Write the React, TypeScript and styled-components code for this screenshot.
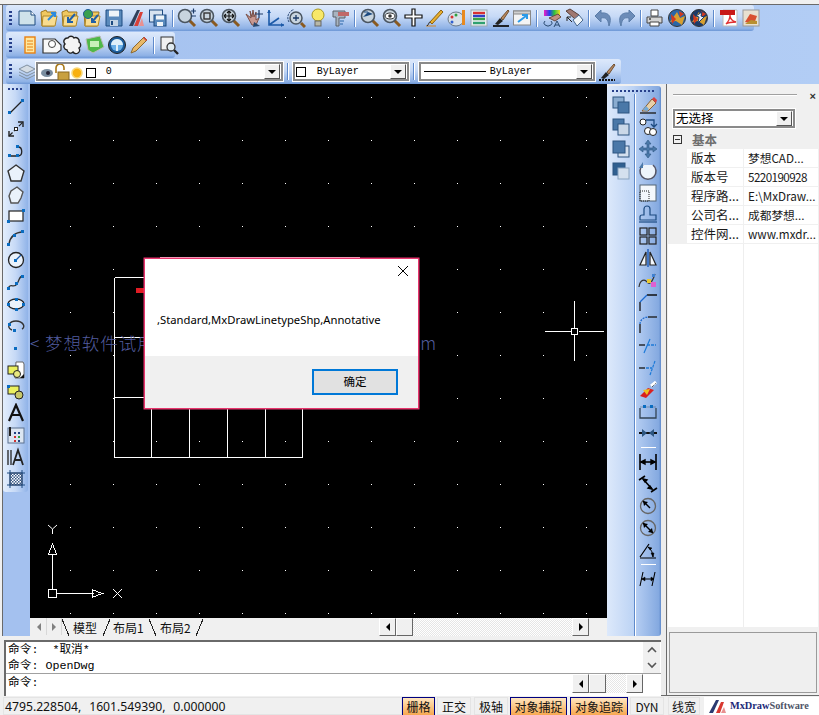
import React from 'react';
import styled, {createGlobalStyle} from 'styled-components';

const cjk = '"Noto Sans CJK SC", "Noto Sans", sans-serif';
const mono = '"Liberation Mono", "Noto Sans CJK SC", monospace';

const GlobalStyle = createGlobalStyle`
  html, body { margin: 0; padding: 0; background: #f0f0f0; }
  * { box-sizing: border-box; }
`;

const Mag: React.FC<{children?: React.ReactNode}> = ({children}) => (
  <>
    <path d="M12 12l6 6" stroke="#8a5a20" strokeWidth="3" />
    <circle cx="8" cy="8" r="6.5" fill="#c8d4de" stroke="#4a5560" strokeWidth="1.6" />
    {children}
  </>
);
const Box = ({x, y, s = 3}: {x: number; y: number; s?: number}) => <rect x={x} y={y} width={s} height={s} fill="#0a6cc0" />;
const Folder: React.FC<{children?: React.ReactNode}> = ({children}) => (
  <>
    <path d="M2 4l5-2 1 2h9l-2 14H3z" fill="#f0c860" stroke="#a07820" />
    <path d="M4 8h14l-2 10H3z" fill="#f8dc90" stroke="#b08828" />
    {children}
  </>
);
const Globe = ({c = '#2a66a8'}: {c?: string}) => (
  <>
    <circle cx="10" cy="10" r="8.5" fill={c} stroke="#333" />
    <path d="M3 14l7-10 3 6 5-2-3 9-6-4z" fill="#d8a030" />
    <path d="M4 6l5 5-4 5zM12 3l5 3-4 3z" fill="#d03a20" />
  </>
);
const Stack = ({a, b}: {a: string; b: string}) => (
  <>
    <rect x="2" y="2" width="11" height="11" fill={a} stroke="#2c5580" />
    <rect x="7" y="7" width="11" height="11" fill={b} stroke="#2c5580" />
  </>
);
const Dim: React.FC<{children?: React.ReactNode}> = ({children}) => (
  <g stroke="#000" strokeWidth="1.4" fill="none">{children}</g>
);

const icons: Record<string, React.ReactNode> = {
  file: <><path d="M2 3h12l4 4v10H2z" fill="#cfe2ea" stroke="#1c4a80" /><path d="M14 3v4h4" fill="#fff" stroke="#1c4a80" /></>,
  open: <Folder><path d="M9 12l7-7M12 5h4v4" stroke="#2a8ae0" strokeWidth="2" fill="none" /></Folder>,
  openRev: <Folder><path d="M15 6L8 14M8 9v5h5" stroke="#2060a8" strokeWidth="2" fill="none" /></Folder>,
  openWeb: <Folder><circle cx="6" cy="6" r="4.5" fill="#38a050" stroke="#1c5aa0" /><path d="M16 7l-6 7M10 10v4h4" stroke="#2060a8" strokeWidth="2" fill="none" /></Folder>,
  save: <><path d="M2 2h16v16H2z" fill="#5a8abc" stroke="#1c4a80" /><rect x="5" y="2.500" width="10" height="6" fill="#eef4f8" /><rect x="6" y="12" width="8" height="6" fill="#c4d4e4" /><rect x="7" y="13" width="2" height="4" fill="#1c4a80" /></>,
  cad: <><path d="M3 18L11 2h3L7 18z" fill="#30405c" /><path d="M8 18L14 4h3l-5 14z" fill="#d84038" /><path d="M13 18l3-8 2 8z" fill="#e89090" /></>,
  saveAs: <><rect x="1.5" y="2" width="13" height="12" fill="#d8e4f0" stroke="#1c4a80" /><rect x="6" y="7" width="12" height="11" fill="#5a8abc" stroke="#1c4a80" /><rect x="8" y="7.5" width="8" height="4" fill="#eef4f8" /><rect x="9" y="14" width="6" height="4" fill="#eef4f8" /></>,
  zoomPm: <Mag><path d="M14 3h5M16.5 .5v5M14 8h5" stroke="#1c3a68" strokeWidth="1.2" /></Mag>,
  zoomWin: <Mag><rect x="5" y="5" width="6" height="6" fill="none" stroke="#333" strokeWidth="1.4" /></Mag>,
  zoomPan: <Mag><path d="M8 3v10M3 8h10M8 3l-2 2M8 3l2 2M8 13l-2-2M8 13l2-2M3 8l2-2M3 8l2 2M13 8l-2-2M13 8l-2 2" stroke="#111" strokeWidth="1.1" fill="none" /></Mag>,
  hand: <><path d="M3 6l5 4-1-7 2 6 1-7 1 7 2-5v8l3-2-3 7H9z" fill="#c89890" stroke="#7a5048" /><path d="M11 14l6 4-7 1z" fill="#2a4a70" /><path d="M16 2v8M12 6h8" stroke="#1c3a68" strokeWidth="1.2" /></>,
  ucs: <><path d="M4 2v15h15M4 17l10-7" stroke="#1c5aa8" strokeWidth="1.6" fill="none" /><path d="M2 5l2-3 2 3zM16 15l3 2-3 2z" fill="#1c5aa8" /></>,
  zoomPrev: <><path d="M15 15l4 4" stroke="#8a5a20" strokeWidth="3" /><circle cx="10" cy="10" r="6" fill="#c8d4de" stroke="#4a5560" strokeWidth="1.5" /><path d="M10 7v6M7 10h6" stroke="#1c3a68" strokeWidth="1.3" /><path d="M3 14A8.5 8.5 0 0 1 8 1.5" stroke="#1c3a68" fill="none" strokeDasharray="2 1" /></>,
  bulb: <><circle cx="10" cy="7" r="6" fill="#f8e868" stroke="#a89820" /><rect x="7" y="13" width="6" height="5" fill="#b8b8a8" stroke="#666" /></>,
  tape: <><path d="M3 3h12v7H9v8H6V9H3z" fill="#a8b4c0" stroke="#5a6068" /><path d="M8 4h11v4H8z" fill="#c06868" /><path d="M10 13h4M10 16h3" stroke="#2a66a8" /></>,
  zoomDark: <Mag><path d="M3 9l5-5 5 2-6 2z" fill="#1c4a80" /><path d="M4 4l4 0" stroke="#1c4a80" /></Mag>,
  zoomEye: <Mag><ellipse cx="8" cy="8" rx="5" ry="3" fill="#fff" stroke="#333" /><circle cx="8" cy="8" r="1.8" fill="#333" /></Mag>,
  cross: <path d="M9 1h3v6h7v3h-7v8H9v-8H2V7h7z" fill="#fff" stroke="#111" strokeWidth="1.2" />,
  pen: <><path d="M5 14L16 2l2 2L7 16z" fill="#e8b030" stroke="#8a6010" /><path d="M1 18h10" stroke="#c09868" strokeWidth="1.5" /><path d="M2 18c2-2 2-4 3-4" stroke="#222" fill="none" /></>,
  palette: <><ellipse cx="9" cy="11" rx="8" ry="7" fill="#d8e0e8" stroke="#6a7a8a" /><circle cx="5" cy="9" r="1.5" fill="#d83030" /><circle cx="9" cy="7" r="1.5" fill="#30a040" /><circle cx="5" cy="14" r="1.5" fill="#3060d0" /><rect x="15" y="2" width="3" height="15" fill="#e88a20" /></>,
  layers: <><rect x="2" y="2" width="16" height="16" fill="#e8eef0" stroke="#9aa8b0" /><path d="M4 5h12" stroke="#d83030" strokeWidth="2.4" /><path d="M4 8h12" stroke="#3040c8" strokeWidth="2.4" /><path d="M4 11h12" stroke="#38a048" strokeWidth="2.4" /><path d="M4 15h12" stroke="#30a070" strokeWidth="2.4" /></>,
  brush: <><path d="M2 18h16" stroke="#111" strokeWidth="1.8" /><path d="M4 16l5-6 3 3-5 4z" fill="#222" /><path d="M10 10l7-8 1 1-6 9z" fill="#b88860" stroke="#705030" /></>,
  arrowBox: <><rect x="1.5" y="3" width="17" height="14" fill="#f4f4f4" stroke="#888" /><rect x="1.5" y="3" width="17" height="3" fill="#d0d0d0" stroke="#888" /><path d="M6 14l8-6M10 7h5v4" stroke="#2a9ae8" strokeWidth="2" fill="none" /></>,
  rainbow: <><path d="M2 2h16v6H2z" fill="url(#rb)" /><path d="M7 10l9-4 3 3-6 4z" fill="#c09080" stroke="#6a4a40" /><path d="M3 13a4 3 0 1 0 6 0M12 19l3-6 3 6M13 17h4" stroke="#2a4a70" fill="none" /></>,
  matchProp: <><path d="M2 3l4-2 9 6-4 4z" fill="#a07870" stroke="#5a4038" /><path d="M9 12l6-5 4 5-6 6z" fill="#eef4f8" stroke="#4a6a90" /><path d="M3 9l5 5M3 9v4M3 9h4" stroke="#222" fill="none" /></>,
  undo: <path d="M7 2L1 8l6 6v-4c5-1 7 1 8 8 3-8 1-14-8-13z" fill="#6c8cb8" stroke="#5a7ca8" />,
  redo: <path d="M13 2l6 6-6 6v-4c-5-1-7 1-8 8-3-8-1-14 8-13z" fill="#6c8cb8" stroke="#5a7ca8" />,
  print: <><path d="M6 2h7v6H6z" fill="#fff" stroke="#444" /><path d="M2 9h15v6H2z" fill="#d4d4d4" stroke="#444" /><path d="M5 14h9v4H5z" fill="#fff" stroke="#444" /><circle cx="5" cy="11" r="1" fill="#444" /></>,
  globe: <Globe />,
  globe2: <><Globe c="#1c3a68" /><path d="M13 4l-6 4 3 1-1 6 6-6-3-1z" fill="#e8f0f8" stroke="#1c3a68" /></>,
  pdf: <><path d="M4 2h14v16H4z" fill="#fff" stroke="#bbb" /><rect x="1" y="2" width="15" height="5" fill="#c81818" /><path d="M7 16c3-3 4-6 4-9 0 4 2 6 6 7-4 0-7 0-10 2z" fill="none" stroke="#e03030" strokeWidth="1.3" /></>,
  pdfImg: <><rect x="2" y="2" width="16" height="16" fill="#e8e0d0" stroke="#999" /><path d="M4 14l5-8 7 2-3 8z" fill="#d85030" /><path d="M4 16l6-4 6 1v3z" fill="#b89030" /></>,
  list: <><rect x="5" y="2" width="10" height="16" fill="#ffe8a0" stroke="#e88010" strokeWidth="1.4" /><path d="M7 6h6M7 9h6M7 12h6M7 15h6" stroke="#e88010" /></>,
  wipe: <><path d="M1 4h12l6 6v5l-4 3H1z" fill="#f8f8f8" stroke="#333" strokeWidth="1.2" /><circle cx="10" cy="9" r="3.5" fill="#fff" stroke="#444" /></>,
  cloud: <path d="M5 3a3.5 3.5 0 0 1 6 0 3.5 3.5 0 0 1 5 4 3.5 3.5 0 0 1 0 6 3.5 3.5 0 0 1-6 4 3.5 3.5 0 0 1-6-2 3.5 3.5 0 0 1-2-6 3.5 3.5 0 0 1 3-6z" fill="#f4f4f4" stroke="#222" strokeWidth="1.4" />,
  chat: <><path d="M1 4l14-3 4 11-11 6-5-3z" fill="#50b848" stroke="#bbb" /><rect x="5" y="6" width="9" height="6" fill="#c8f0b8" /></>,
  dial: <><circle cx="10" cy="10" r="8.5" fill="#1c5a98" stroke="#222" /><circle cx="10" cy="10" r="6" fill="#6ab0e8" /><path d="M4 10a6 6 0 0 1 12 0zM9 10h2v6H9z" fill="#dff0fa" /></>,
  pencil: <><path d="M2 18l2-5L15 2l3 3L7 16z" fill="#e8b868" stroke="#8a6830" /><path d="M14 3l3 3 1-1-3-3z" fill="#d84040" /></>,
  preview: <><rect x="2" y="2" width="12" height="13" fill="#f0f0f0" stroke="#333" /><path d="M15 15l4 4" stroke="#222" strokeWidth="2.4" /><circle cx="12" cy="12" r="4" fill="#e0eaf0" stroke="#333" strokeWidth="1.3" /></>,
  layerMgr: <><path d="M10 3l8 4-8 4-8-4z" fill="#d4dce4" stroke="#8090a0" /><path d="M2 10l8 4 8-4M2 13l8 4 8-4" fill="none" stroke="#8090a0" /></>,
  brushDot: <><path d="M2 18h16" stroke="#111" strokeWidth="1.8" strokeDasharray="2 1" /><path d="M4 16l5-6 3 3-5 4z" fill="#222" /><path d="M10 10l7-8 1 1-6 9z" fill="#b88860" stroke="#705030" /></>,
  line: <><path d="M4 16L16 4" stroke="#222" strokeWidth="1.2" /><Box x={2} y={14} /><Box x={15} y={2} /></>,
  xline: <><path d="M3 17L17 3" stroke="#222" strokeDasharray="5 2" strokeWidth="1.2" /><path d="M3 12v5h5M12 3h5v5" stroke="#222" fill="none" strokeWidth="1.4" /><rect x="8.5" y="8.5" width="3" height="3" fill="#fff" stroke="#222" /></>,
  pline: <><path d="M3 15h9c5 0 5-9 0-9" stroke="#222" fill="none" strokeWidth="1.3" /><Box x={2} y={13} /><Box x={10} y={13} /><Box x={10} y={4} /></>,
  polygon: <path d="M10 2l8 6-3 10H5L2 8z" fill="#eaf2fb" stroke="#333" strokeWidth="1.4" />,
  poly2: <path d="M11 2l6 5-2 6-3 5H5L3 11l2-5z" fill="#eaf2fb" stroke="#555" strokeWidth="1.4" />,
  rect: <><rect x="3" y="5" width="14" height="10" fill="#fff" stroke="#222" strokeWidth="1.2" /><Box x={1} y={14} /><Box x={16} y={3} /></>,
  arc: <><path d="M3 16C4 9 9 4 17 4" stroke="#333" fill="none" strokeWidth="1.4" /><Box x={1} y={15} /><Box x={7} y={6} /><Box x={15} y={2} /></>,
  circle: <><circle cx="10" cy="10" r="7.5" fill="#eaf2fb" stroke="#222" strokeWidth="1.3" /><path d="M10 10l5-5" stroke="#1c5aa8" strokeWidth="1.2" /><Box x={8} y={9} /></>,
  spline: <><path d="M2 17c2-7 6 0 9-5s2-8 6-8" stroke="#333" fill="none" strokeWidth="1.3" /><Box x={1} y={15} /><Box x={9} y={10} /><Box x={15} y={3} /></>,
  ellipse: <><ellipse cx="10" cy="10" rx="8" ry="5" fill="#eaf2fb" stroke="#222" strokeWidth="1.3" /><Box x={1} y={9} /><Box x={16} y={9} /><Box x={9} y={4} /><Box x={9} y={14} /></>,
  ellipseArc: <><path d="M6 14C0 12 3 5 10 5s10 6 6 8" stroke="#333" fill="none" strokeWidth="1.4" /><Box x={2} y={7} /><Box x={7} y={13} /></>,
  point: <Box x={8} y={9} />,
  block: <><path d="M10 2h7l1 2v14H9z" fill="#fff" stroke="#666" /><rect x="2" y="6" width="10" height="8" fill="#eaf060" stroke="#222" /><circle cx="11" cy="14" r="3.5" fill="#e8e880" stroke="#222" /><path d="M14 18l4-4v4z" fill="#111" /></>,
  makeBlock: <><rect x="2" y="4" width="11" height="8" fill="#eaf060" stroke="#222" /><circle cx="13" cy="13" r="4" fill="#c8c868" stroke="#222" /><Box x={1} y={3} /></>,
  textA: <path d="M3 18L10 2l7 16M5.5 12h9" stroke="#111" strokeWidth="2.2" fill="none" />,
  table: <><rect x="2" y="3" width="16" height="15" fill="#dce6f2" stroke="#5a7090" /><path d="M8 7h2v2H8zM12 7h2v2h-2z" fill="#204080" /><path d="M8 11h2v2H8z" fill="#d03030" /><path d="M12 11h2v2h-2z" fill="#30a040" /><path d="M8 15h2v2H8z" fill="#d03030" /><path d="M12 15h2v2h-2z" fill="#204080" /><path d="M4 2v9" stroke="#222" strokeWidth="2" /></>,
  mtext: <><path d="M2 3v15M5 3v15" stroke="#222" strokeWidth="1.3" /><path d="M7 18l5-15 5 15M9 13h6" stroke="#222" strokeWidth="1.8" fill="none" /></>,
  hatch: <><rect x="4" y="4" width="12" height="12" fill="url(#ht)" stroke="#445" /><path d="M1 4h18M1 16h18M4 1v18M16 1v18" stroke="#1c4a80" /></>,
  s1: <Stack a="#8aacd0" b="#4a78a8" />,
  s2: <Stack a="#4a78a8" b="#cad8e8" />,
  s3: <><rect x="7" y="7" width="11" height="11" fill="#d4e0ee" stroke="#2c5580" /><rect x="2" y="2" width="12" height="12" fill="#4a78a8" stroke="#2c5580" /></>,
  s4: <><rect x="2" y="2" width="12" height="12" fill="#2f5f90" stroke="#2c5580" /><rect x="7" y="7" width="11" height="11" fill="#d4e0ee" stroke="#8aa4c0" /></>,
  eraser: <><path d="M2 18h16" stroke="#222" strokeWidth="1.4" /><path d="M4 16l10-12 4 4-8 8z" fill="#e8d0a8" stroke="#8a6030" /><path d="M14 4l2-2 3 3-1 3z" fill="#d84040" /><path d="M5 15l3-4 3 3-2 2z" fill="#70a8d8" /></>,
  copyObj: <><circle cx="5" cy="5" r="3" fill="#fff" stroke="#222" /><circle cx="10" cy="14" r="3.5" fill="#fff" stroke="#222" /><circle cx="15" cy="15" r="3.5" fill="#fff" stroke="#222" /><path d="M8 3h8v6M13 7l3 3 3-3" stroke="#1c4a80" fill="none" strokeWidth="1.3" /></>,
  move: <path d="M10 1l3 4h-2v4h4V7l4 3-4 3v-2h-4v4h2l-3 4-3-4h2v-4H5v2l-4-3 4-3v2h4V5H7z" fill="#4a78a8" stroke="#2c5580" strokeWidth=".6" />,
  rotate: <><path d="M5 4a8 8 0 1 0 10 0" stroke="#556" strokeWidth="1.6" fill="#eef4fb" /><path d="M5 1v6H1z" fill="#4a78a8" /></>,
  scale: <><rect x="2" y="2" width="16" height="16" fill="#f4f8fc" stroke="#567" /><rect x="2" y="8" width="9" height="10" fill="none" stroke="#222" strokeDasharray="1 1" /></>,
  offset: <><path d="M6 11V5a3 3 0 0 1 6 0v6h6v5H2v-3a2 2 0 0 1 2-2z" fill="none" stroke="#1c4a80" strokeWidth="1.2" /><path d="M1 18h18" stroke="#1c4a80" strokeWidth="1.2" /></>,
  array: <><rect x="2" y="2" width="7" height="7" fill="none" stroke="#222" strokeWidth="1.2" /><rect x="11" y="2" width="7" height="7" fill="none" stroke="#222" strokeWidth="1.2" /><rect x="2" y="11" width="7" height="7" fill="none" stroke="#222" strokeWidth="1.2" /><rect x="11" y="11" width="7" height="7" fill="none" stroke="#222" strokeWidth="1.2" /></>,
  mirror: <><path d="M8 4L2 17h6zM12 4l6 13h-6z" fill="#f4f8fc" stroke="#222" strokeWidth="1.2" /><path d="M10 1v18" stroke="#1c5ab8" strokeWidth="1.4" /></>,
  splineEdit: <><path d="M1 17c1-8 6-8 8-5s5 1 8-8" stroke="#333" fill="none" strokeWidth="1.2" /><rect x="9" y="9" width="4" height="4" fill="#e8c830" /><rect x="13" y="12" width="5" height="5" fill="#e060d0" /><rect x="14" y="4" width="3" height="3" fill="#4080d0" /></>,
  chamfer: <><path d="M2 19V10M9 3h10" stroke="#111" strokeWidth="1.3" fill="none" /><path d="M2 10l7-7" stroke="#1c6ad0" strokeWidth="1.2" /></>,
  fillet: <><path d="M2 19V10" stroke="#222" strokeWidth="1.4" /><path d="M10 3h9" stroke="#222" strokeWidth="1.4" /><path d="M2 10C2 6 6 3 10 3" stroke="#1c6ad0" strokeWidth="1.2" fill="none" strokeDasharray="2 1" /></>,
  breakOne: <><path d="M1 9h6" stroke="#111" strokeWidth="1.3" /><path d="M9 9h9" stroke="#1c7ad8" strokeDasharray="3 1" strokeWidth="1.3" /><path d="M6 17l6-14" stroke="#1c7ad8" strokeWidth="1.2" /></>,
  breakTwo: <><path d="M1 10h6" stroke="#111" strokeWidth="1.3" /><path d="M8 10h6" stroke="#1c7ad8" strokeDasharray="3 1" strokeWidth="1.3" /><path d="M12 17l5-14" stroke="#1c7ad8" strokeDasharray="3 1" strokeWidth="1.2" /></>,
  explode: <><path d="M2 16l8-8 6 2-8 8z" fill="#d82020" /><path d="M5 10l7-1-3 6z" fill="#f0c020" /><path d="M13 6l5-4" stroke="#fff" strokeWidth="3" /><path d="M14 7l4-4" stroke="#222" strokeDasharray="1 1" /></>,
  stretch: <><path d="M2 7v10h16V7" fill="none" stroke="#345" strokeWidth="1.3" /><path d="M2 6h16" stroke="#345" strokeWidth=".4" /><Box x={5} y={4} /><Box x={12} y={4} /></>,
  join: <><path d="M1 10h18" stroke="#111" strokeWidth="2" /><path d="M4 6l5 4-5 4zM16 6l-5 4 5 4z" fill="#2c5580" /></>,
  dimLin: <Dim><path d="M2 2v16M18 2v16" strokeWidth="1.6" /><path d="M3 10h14" strokeWidth="1.6" /><path d="M3 10l4-2v4zM17 10l-4-2v4z" fill="#000" /></Dim>,
  dimAli: <Dim><path d="M1 6l6-4M13 18l6-4M5 5l9 10" strokeWidth="1.6" /><path d="M5 5l4 1-2 2zM14 15l-4-1 2-2z" fill="#000" /></Dim>,
  dimRad: <><circle cx="10" cy="10" r="7.5" fill="none" stroke="#666" strokeWidth="1.3" /><path d="M5 5l7 7" stroke="#000" strokeWidth="1.4" /><path d="M5 5l5 1-4 4z" fill="#000" /></>,
  dimDia: <><circle cx="10" cy="10" r="7.5" fill="none" stroke="#666" strokeWidth="1.3" /><path d="M5 5l10 10" stroke="#000" strokeWidth="1.4" /><path d="M5 5l5 1-4 4zM15 15l-5-1 4-4z" fill="#000" /></>,
  dimAng: <Dim><path d="M2 18h16M2 17L11 4" strokeWidth="1.2" /><path d="M10 7c3 2 5 6 5 10" strokeWidth="1" /><path d="M15 17l-2-4h3zM10 7l4 1-2 2z" fill="#000" strokeWidth=".5" /></Dim>,
  dimCont: <Dim><path d="M5 3L2 17M17 3l-3 14M4 10h12" strokeWidth="1.1" /><path d="M4 10l3-2v4zM16 10l-3-2v4z" fill="#000" strokeWidth=".5" /></Dim>
};

const row1 = ['file', 'open', 'openRev', 'openWeb', 'save', 'cad', 'saveAs', '|', 'zoomPm', 'zoomWin', 'zoomPan', 'hand', 'ucs', 'zoomPrev', 'bulb', 'tape', '|', 'zoomDark', 'zoomEye', 'cross', 'pen', 'palette', 'layers', 'brush', 'arrowBox', '|', 'rainbow', 'matchProp', '|', 'undo', 'redo', '|', 'print', 'globe', 'globe2', '|', 'pdf', 'pdfImg'];
const row2 = ['list', 'wipe', 'cloud', 'chat', 'dial', 'pencil', '|', 'preview'];
const leftTools = ['line', 'xline', 'pline', 'polygon', 'poly2', 'rect', 'arc', 'circle', 'spline', 'ellipse', 'ellipseArc', 'point', 'block', 'makeBlock', 'textA', 'table', 'mtext', 'hatch'];
const orderTools = ['s1', 's2', 's3', 's4'];
const modifyTools = ['eraser', 'copyObj', 'move', 'rotate', 'scale', 'offset', 'array', 'mirror', 'splineEdit', 'chamfer', 'fillet', 'breakOne', 'breakTwo', 'explode', 'stretch', 'join', '-', 'dimLin', 'dimAli', 'dimRad', 'dimDia', 'dimAng', '-', 'dimCont'];

const props = [
  ['版本', '梦想CAD...'],
  ['版本号', '5220190928'],
  ['程序路...', 'E:\\MxDraw...'],
  ['公司名...', '成都梦想...'],
  ['控件网...', 'www.mxdr...']
];

const statusItems = [
  {label: '栅格', w: 33, gap: 0, on: true},
  {label: '正交', w: 34, gap: 2},
  {label: '极轴', w: 34, gap: 3},
  {label: '对象捕捉', w: 57, gap: 2, on: true},
  {label: '对象追踪', w: 58, gap: 3, on: true},
  {label: 'DYN', w: 34, gap: 2},
  {label: '线宽', w: 32, gap: 4}
];

const Frame = styled.div`
  width: 819px;
  height: 715px;
  display: flex;
  flex-direction: column;
  overflow: hidden;
  background: #f0f0f0;
  font-family: ${cjk};
`;
const TopEdge = styled.div`
  height: 5px;
  flex: none;
  background: #f0f0f0;
  border-bottom: 1px solid #6a6a6a;
`;
const Dock = styled.div`
  height: 79px;
  flex: none;
  margin-left: 2px;
  display: flex;
  flex-direction: column;
  gap: 1px;
  padding-left: 3px;
  background: linear-gradient(90deg, #a4c1ef, #b2cdf5);
  border-left: 1px solid #6a6a6a;
`;
const Toolbar = styled.div<{$w: number; $h?: number}>`
  display: flex;
  align-items: center;
  flex: none;
  width: ${p => p.$w}px;
  height: ${p => p.$h || 26}px;
  padding-left: 2px;
  border-radius: 3px;
  background: linear-gradient(180deg, #dde9fb 0%, #c6d9f6 45%, #8fb2e6 90%, #6d97d6 100%);
`;
const Grip = styled.span`
  width: 3px;
  height: 15px;
  margin: 0 4px 0 1px;
  flex: none;
  background: repeating-linear-gradient(180deg, #27408b 0 2px, transparent 2px 4px);
`;
const HGrip = styled.span<{$w: number; $after: number}>`
  display: block;
  flex: none;
  width: ${p => p.$w}px;
  height: 2px;
  margin: 0 auto ${p => p.$after}px;
  background: repeating-linear-gradient(90deg, #27408b 0 2px, transparent 2px 4px);
`;
const Tool = styled.span`
  width: 21.8px;
  height: 22px;
  flex: none;
  display: flex;
  align-items: center;
  justify-content: center;
`;
const LayerTool = styled(Tool)`
  margin-right: -3px;
`;
const VTool = styled(Tool)`
  width: 100%;
  height: 21.9px;
`;
const Sep = styled.span`
  width: 2px;
  height: 17px;
  margin: 0 3px;
  flex: none;
  background: linear-gradient(90deg, #5f8acb 50%, #fff 50%);
`;
const HSep = styled.span`
  display: block;
  width: 15px;
  height: 1px;
  margin: 3px auto 3px;
  background: #fff;
`;
const Combo = styled.div<{$w: number}>`
  width: ${p => p.$w}px;
  height: 21px;
  flex: none;
  display: flex;
  align-items: center;
  padding: 0 2px 0 3px;
  background: #fff;
  border: 1px solid #fff;
  box-shadow: inset 0 0 0 2px #8a8a8a;
  font: 10px/1 ${mono};
  color: #000;
`;
const ComboText = styled.span<{$pad?: number}>`
  flex: 1;
  padding-left: ${p => p.$pad || 0}px;
  white-space: pre;
`;
const ComboArrow = styled.span`
  width: 16px;
  height: 15px;
  margin-right: 1px;
  flex: none;
  display: flex;
  align-items: center;
  justify-content: center;
  background: #f0f0f0;
  border: 1px solid;
  border-color: #fff #555 #555 #fff;
`;
const Tri = styled.i<{$dir: 'down' | 'left' | 'right'; $c?: string}>`
  display: block;
  width: 0;
  height: 0;
  border-style: solid;
  border-color: transparent;
  ${p => p.$dir === 'down' && `border-width: 4px 4px 0; border-top-color: ${p.$c || '#000'};`}
  ${p => p.$dir === 'left' && `border-width: 4px 4px 4px 0; border-right-color: ${p.$c || '#000'};`}
  ${p => p.$dir === 'right' && `border-width: 4px 0 4px 4px; border-left-color: ${p.$c || '#000'};`}
`;
const Swatch = styled.span`
  width: 10px;
  height: 10px;
  flex: none;
  border: 1px solid #000;
  background: #fff;
`;
const LinePreview = styled.span`
  width: 62px;
  height: 1px;
  flex: none;
  background: #000;
  margin-left: 2px;
`;
const Workspace = styled.div`
  flex: 1;
  display: flex;
  min-height: 0;
`;
const MainColumn = styled.div`
  width: 661px;
  flex: none;
  display: flex;
  flex-direction: column;
`;
const DrawRow = styled.div`
  height: 552px;
  flex: none;
  display: flex;
`;
const LeftDock = styled.div`
  width: 31px;
  flex: none;
  margin-left: 2px;
  background: #a4c1ef;
  border-left: 1px solid #6a6a6a;
`;
const VToolbar = styled.div`
  height: 408px;
  width: 25px;
  padding-top: 4px;
  border-radius: 0 0 3px 3px;
  background: linear-gradient(90deg, #e3eefc 0%, #c6d9f6 50%, #90b3e8 100%);
`;
const CanvasColumn = styled.div`
  width: 577px;
  flex: none;
  margin-left: -3px;
  display: flex;
  flex-direction: column;
`;
const Canvas = styled.div`
  position: relative;
  height: 534px;
  flex: none;
  background: #000;
  overflow: hidden;
`;
const Drawing = styled.svg`
  position: absolute;
  inset: 0;
  display: block;
`;
const Watermark = styled.span`
  position: absolute;
  top: 247px;
  font-size: 17.5px;
  line-height: 24px;
  letter-spacing: .9px;
  font-weight: 300;
  color: #525c9e;
  white-space: pre;
`;
const Dialog = styled.div`
  position: absolute;
  left: 114px;
  top: 174px;
  width: 275px;
  height: 151px;
  display: flex;
  flex-direction: column;
  background: #fff;
  border: 1px solid #e8356e;
  box-shadow: 0 0 0 .5px #e8356e;
`;
const DialogBody = styled.div`
  position: relative;
  flex: 1;
  padding: 52px 0 0 12px;
  font: 11.25px/18px "Noto Sans", sans-serif;
  color: #000;
`;
const CloseBox = styled.svg`
  position: absolute;
  right: 9px;
  top: 6px;
`;
const DialogFoot = styled.div`
  height: 52px;
  flex: none;
  display: flex;
  align-items: center;
  justify-content: flex-end;
  padding: 0 20px 0 0;
  background: #f0f0f0;
`;
const OkButton = styled.button`
  width: 86px;
  height: 26px;
  padding: 0;
  background: #e1e1e1;
  border: 2px solid #0078d7;
  font: 11.5px/1 ${cjk};
  color: #000;
`;
const TabBar = styled.div`
  height: 18px;
  flex: none;
  display: flex;
  align-items: stretch;
  background: #f0f0f0;
  font-size: 12px;
  color: #111;
`;
const TabNav = styled.span`
  width: 15px;
  height: 17px;
  flex: none;
  display: flex;
  align-items: center;
  justify-content: center;
  border-right: 1px solid #d8d8d8;
`;
const TabStrip = styled.div`
  flex: 1;
  display: flex;
  align-items: center;
`;
const TabLabel = styled.span<{$w: number; $l: number; $r: number}>`
  width: ${p => p.$w}px;
  margin: 0 ${p => p.$r}px 0 ${p => p.$l}px;
  flex: none;
  text-align: center;
  line-height: 17px;
  white-space: nowrap;
`;
const TabFwd = styled.span`
  width: 7px;
  height: 17px;
  flex: none;
  background: linear-gradient(to top left, transparent 46%, #222 46% 54%, transparent 54%);
`;
const TabBack = styled(TabFwd)`
  background: linear-gradient(to top right, transparent 46%, #222 46% 54%, transparent 54%);
`;
const ScrollBtn = styled.span`
  width: 17px;
  flex: none;
  display: flex;
  align-items: center;
  justify-content: center;
  background: #f0f0f0;
  border: 1px solid;
  border-color: #fff #666 #666 #fff;
`;
const Track = styled.span<{$w: number}>`
  width: ${p => p.$w}px;
  flex: none;
  background: repeating-conic-gradient(#fff 0 25%, #e6e6e6 0 50%) 0 0 / 2px 2px;
`;
const Filler = styled.span<{$w: number}>`
  width: ${p => p.$w}px;
  flex: none;
`;
const RightDock = styled.div`
  width: 54px;
  height: 550px;
  flex: none;
  margin-top: 2px;
  display: flex;
  flex-direction: column;
  padding-top: 4px;
  border-radius: 3px 3px 3px 0;
  background: linear-gradient(90deg, #dde9fb 0%, #bcd3f4 50%, #b7cff3 52%, #84a9e0 96%, #5f8acb 100%);
`;
const RightCols = styled.div`
  flex: 1;
  display: flex;
`;
const RightCol = styled.div<{$line?: boolean}>`
  width: 27px;
  flex: none;
  ${p => p.$line && 'border-left: 1px solid #5f8acb; box-shadow: inset 1px 0 0 #fff;'}
`;
const CommandBox = styled.div`
  margin-top: 4px;
  height: 56px;
  margin-left: 4px;
  flex: none;
  background: #fff;
  border-top: 2px solid #6a6a6a;
  border-left: 2px solid #6a6a6a;
  display: flex;
  flex-direction: column;
`;
const History = styled.div`
  height: 32px;
  flex: none;
  display: flex;
  border-bottom: 1px solid #a0a0a0;
`;
const HistoryText = styled.div`
  flex: 1;
  padding-left: 2px;
`;
const PromptText = styled(HistoryText)`
  padding-top: 1px;
`;
const CmdLine = styled.div`
  height: 16px;
  font: 11.7px/16px ${mono};
  color: #000;
  white-space: pre;
`;
const VScroll = styled.div`
  width: 17px;
  flex: none;
  margin-right: 1px;
  display: flex;
  flex-direction: column;
  align-items: center;
  justify-content: space-around;
  background: #f0f0f0;
`;
const PromptRow = styled.div`
  flex: 1;
  display: flex;
`;
const PromptScroll = styled.div`
  display: flex;
  align-items: stretch;
  height: 19px;
`;
const Sash = styled.div`
  width: 6px;
  flex: none;
  border-right: 1px solid #6a6a6a;
  border-bottom: 1px solid #6a6a6a;
  background: #ececec;
`;
const Panel = styled.div`
  flex: 1;
  display: flex;
  flex-direction: column;
  padding: 0 1px;
  border-bottom: 1px solid #6a6a6a;
  background: #f0f0f0;
`;
const PanelHead = styled.div`
  position: relative;
  height: 24px;
  flex: none;
`;
const PanelRule = styled.div`
  position: absolute;
  left: 5px;
  top: 10px;
  width: 124px;
  height: 2px;
  border-top: 1px solid #a0a0a0;
  border-bottom: 1px solid #fff;
`;
const PanelClose = styled.span`
  position: absolute;
  right: 2px;
  top: 6px;
  font: bold 11px/12px "Liberation Sans", sans-serif;
  color: #333;
`;
const PanelCombo = styled(Combo)`
  margin-left: 4px;
  font: 12.5px/1 ${cjk};
`;
const GroupRow = styled.div`
  height: 20px;
  flex: none;
  display: flex;
  align-items: center;
  padding-left: 5px;
  color: #6e6e6e;
  font-size: 12.5px;
  font-weight: 700;
`;
const Minus = styled.span`
  width: 9px;
  height: 9px;
  margin-right: 10px;
  flex: none;
  border: 1px solid #333;
  background: linear-gradient(#333, #333) center / 5px 1px no-repeat;
`;
const Row = styled.div`
  height: 19px;
  flex: none;
  display: flex;
  margin-left: 19px;
  background: #fff;
  border-bottom: 1px solid #f0f0f0;
  color: #1a1a1a;
  font-size: 12.5px;
  line-height: 17px;
  white-space: nowrap;
  overflow: hidden;
`;
const RowName = styled.span`
  width: 57px;
  flex: none;
  padding-left: 4px;
  border-right: 1px solid #f0f0f0;
  overflow: hidden;
`;
const RowValue = styled.span<{$tight?: boolean}>`
  flex: 1;
  padding-left: 4px;
  font-size: 11.7px;
  overflow: hidden;
  ${p => p.$tight && 'letter-spacing: -.6px;'}
`;
const PanelBlank = styled.div`
  flex: 1;
  background: #fff;
`;
const BlankLine = styled.div`
  width: 76px;
  height: 100%;
  border-right: 1px solid #eee;
`;
const DescBox = styled.div`
  height: 61px;
  flex: none;
  margin: 5px 1px 2px;
  border: 1px solid #9a9a9a;
  background: #efefef;
`;
const StatusBar = styled.div`
  height: 19px;
  flex: none;
  display: flex;
  padding: 1px 0 0 3px;
  font-size: 12px;
  color: #111;
`;
const Coords = styled.div`
  width: 399px;
  flex: none;
  padding-left: 1px;
  border: 1px solid #e4e4e4;
  font: 12.2px/17px "Noto Sans", sans-serif;
  word-spacing: .8px;
  white-space: pre;
`;
const StatusCell = styled.div<{$w: number; $gap: number; $on?: boolean}>`
  width: ${p => p.$w}px;
  margin-left: ${p => p.$gap}px;
  flex: none;
  text-align: center;
  line-height: 17px;
  overflow: hidden;
  ${p => p.$on
    ? 'background: linear-gradient(180deg, #ffe6c0, #f7a850); border: 1px solid #000080; border-bottom: 0;'
    : 'border: 1px solid #e4e4e4;'}
`;
const LogoCell = styled.div`
  flex: 1;
  margin-left: 4px;
  display: flex;
  align-items: center;
  padding-left: 4px;
  gap: 2px;
  background: #fff;
`;
const LogoText = styled.span`
  font: bold 10.3px/1 "Liberation Serif", serif;
  color: #1c2a78;
`;
const LogoSoft = styled.span`
  color: #4e5568;
`;
const ChevronSvg = styled.svg`
  display: block;
`;

const Icon = ({name}: {name: string}) => (
  <svg width="20" height="20" viewBox="0 0 20 20">{icons[name]}</svg>
);

const Chevron = ({d}: {d: string}) => (
  <ChevronSvg width="10" height="8" viewBox="0 0 10 8">
    <path d={d} fill="none" stroke="#555" strokeWidth="1.6" />
  </ChevronSvg>
);

const HRow = ({items}: {items: string[]}) => (
  <>
    {items.map((name, i) => name === '|'
      ? <Sep key={i} />
      : <Tool key={i}><Icon name={name} /></Tool>)}
  </>
);

const dotsX = Array.from({length: 14}, (_, i) => 40 + i * 43);
const dotsY = Array.from({length: 13}, (_, i) => 13 + i * 43);

const CanvasDrawing = () => (
  <Drawing width="577" height="534" viewBox="0 0 577 534" shapeRendering="crispEdges">
    {dotsY.map(y => dotsX.map(x => <rect key={`${x}-${y}`} x={x} y={y} width="1" height="1" fill="#fff" />))}
    <g stroke="#fff" fill="none">
      <path d="M129.5 173.5h200M84.5 193.5h40M84.5 193.5v180M84.5 253.5h40M84.5 313.5h40M84.5 373.5h188" />
      <path d="M121.5 325v48M159.5 325v48M197.5 325v48M235.5 325v48M272.5 325v48" />
    </g>
    <rect x="106" y="204" width="9" height="5" fill="#e01c24" />
    <g stroke="#fff" fill="none">
      <path d="M515 247.5h26M549 247.5h25M544.5 217v27M544.5 251v26" />
      <rect x="541.5" y="244.5" width="6" height="6" />
      <path d="M22.5 470v35M26 509.5h38" />
      <rect x="18.5" y="505.5" width="8" height="8" />
      <path d="M22.5 460l-4 10h8zM72 509.5l-10-4v8zM72 509.5h2" />
    </g>
    <g stroke="#fff" fill="none" shapeRendering="auto">
      <path d="M18 441l4.5 4 4.5-4M22.5 445v5M83 505l9 9M92 505l-9 9" />
    </g>
  </Drawing>
);

const App: React.FC = () => (
  <Frame>
    <GlobalStyle />
    <svg width="0" height="0" style={{position: 'absolute'}}>
      <defs>
        <linearGradient id="rb">
          <stop offset="0" stopColor="#f020c0" />
          <stop offset=".35" stopColor="#2040f0" />
          <stop offset=".65" stopColor="#30c040" />
          <stop offset="1" stopColor="#f0e020" />
        </linearGradient>
        <pattern id="ht" width="3" height="3" patternUnits="userSpaceOnUse">
          <rect width="3" height="3" fill="#fff" />
          <rect width="1.5" height="1.5" fill="#3a5a88" />
          <rect x="1.5" y="1.5" width="1.5" height="1.5" fill="#3a5a88" />
        </pattern>
      </defs>
    </svg>
    <TopEdge />
    <Dock>
      <Toolbar $w={748}>
        <Grip />
        <HRow items={row1} />
      </Toolbar>
      <Toolbar $w={169}>
        <Grip />
        <Filler $w={3} />
        <HRow items={row2} />
      </Toolbar>
      <Toolbar $w={615} $h={25}>
        <Grip />
        <LayerTool><Icon name="layerMgr" /></LayerTool>
        <Combo $w={249}>
          <svg width="66" height="16" viewBox="0 0 66 16">
            <ellipse cx="8" cy="9" rx="6" ry="4" fill="#7a8ea0" />
            <circle cx="9" cy="9" r="2" fill="#223" />
            <path d="M17 9V4a4 4 0 0 1 8 0v2" fill="none" stroke="#a87818" strokeWidth="1.6" />
            <rect x="19" y="8" width="11" height="8" fill="#c8a040" stroke="#8a6820" />
            <circle cx="38" cy="9" r="5" fill="#f8b010" stroke="#f8d878" strokeWidth="1.6" />
            <rect x="47.5" y="4.5" width="9" height="9" fill="#fff" stroke="#000" />
          </svg>
          <ComboText $pad={1}>0</ComboText>
          <ComboArrow><Tri $dir="down" /></ComboArrow>
        </Combo>
        <Sep />
        <Combo $w={118}>
          <Swatch />
          <ComboText $pad={11}>ByLayer</ComboText>
          <ComboArrow><Tri $dir="down" /></ComboArrow>
        </Combo>
        <Sep />
        <Combo $w={178}>
          <LinePreview />
          <ComboText $pad={4}>ByLayer</ComboText>
          <ComboArrow><Tri $dir="down" /></ComboArrow>
        </Combo>
        <Tool><Icon name="brushDot" /></Tool>
      </Toolbar>
    </Dock>
    <Workspace>
      <MainColumn>
        <DrawRow>
          <LeftDock>
            <VToolbar>
              <HGrip $w={16} $after={6} />
              {leftTools.map(name => <VTool key={name}><Icon name={name} /></VTool>)}
            </VToolbar>
          </LeftDock>
          <CanvasColumn>
            <Canvas>
              <CanvasDrawing />
              <Watermark style={{left: 0}}>{'< 梦想软件试用版'}</Watermark>
              <Watermark style={{right: 170}}>www.mxdraw.com</Watermark>
              <Dialog>
                <DialogBody>
                  <CloseBox width="12" height="12" viewBox="0 0 12 12">
                    <path d="M1 1l10 10M11 1L1 11" stroke="#000" strokeWidth="1" />
                  </CloseBox>
                  ,Standard,MxDrawLinetypeShp,Annotative
                </DialogBody>
                <DialogFoot><OkButton>确定</OkButton></DialogFoot>
              </Dialog>
            </Canvas>
            <TabBar>
              <Filler $w={2} />
              <TabNav><Tri $dir="left" $c="#808080" /></TabNav>
              <TabNav><Tri $dir="right" $c="#808080" /></TabNav>
              <TabStrip>
                <TabBack />
                <TabLabel $w={24} $l={4} $r={6}>模型</TabLabel>
                <TabFwd />
                <TabLabel $w={30} $l={3} $r={6}>布局1</TabLabel>
                <TabBack />
                <TabLabel $w={30} $l={4} $r={6}>布局2</TabLabel>
                <TabFwd />
              </TabStrip>
              <ScrollBtn><Tri $dir="left" /></ScrollBtn>
              <ScrollBtn />
              <Track $w={159} />
              <ScrollBtn><Tri $dir="right" /></ScrollBtn>
              <Filler $w={18} />
            </TabBar>
          </CanvasColumn>
          <RightDock>
            <HGrip $w={44} $after={2} />
            <RightCols>
              <RightCol>
                {orderTools.map(name => <VTool key={name}><Icon name={name} /></VTool>)}
              </RightCol>
              <RightCol $line>
                {modifyTools.map((name, i) => name === '-'
                  ? <HSep key={i} />
                  : <VTool key={i}><Icon name={name} /></VTool>)}
              </RightCol>
            </RightCols>
          </RightDock>
        </DrawRow>
        <CommandBox>
          <History>
            <HistoryText>
              <CmdLine>{'命令:  *取消*'}</CmdLine>
              <CmdLine>{'命令: OpenDwg'}</CmdLine>
            </HistoryText>
            <VScroll>
              <Chevron d="M1 6l4-4 4 4" />
              <Chevron d="M1 2l4 4 4-4" />
            </VScroll>
          </History>
          <PromptRow>
            <PromptText><CmdLine>命令:</CmdLine></PromptText>
            <PromptScroll>
              <ScrollBtn><Tri $dir="left" /></ScrollBtn>
              <ScrollBtn />
              <Track $w={20} />
              <ScrollBtn><Tri $dir="right" /></ScrollBtn>
              <Filler $w={18} />
            </PromptScroll>
          </PromptRow>
        </CommandBox>
      </MainColumn>
      <Sash />
      <Panel>
        <PanelHead>
          <PanelRule />
          <PanelClose>×</PanelClose>
        </PanelHead>
        <PanelCombo $w={124}>
          <ComboText>无选择</ComboText>
          <ComboArrow><Tri $dir="down" /></ComboArrow>
        </PanelCombo>
        <GroupRow><Minus />基本</GroupRow>
        {props.map(([name, value]) => (
          <Row key={name}>
            <RowName>{name}</RowName>
            <RowValue $tight={/^\d+$/.test(value)}>{value}</RowValue>
          </Row>
        ))}
        <PanelBlank><BlankLine /></PanelBlank>
        <DescBox />
      </Panel>
    </Workspace>
    <StatusBar>
      <Coords>{'4795.228504,  1601.549390,  0.000000'}</Coords>
      {statusItems.map(item => (
        <StatusCell key={item.label} $w={item.w} $gap={item.gap} $on={item.on}>{item.label}</StatusCell>
      ))}
      <LogoCell>
        <svg width="20" height="16" viewBox="0 0 20 16">
          <path d="M1 15L8 2h3L5 15z" fill="#2a3a70" />
          <path d="M8 15l5-11h3l-4 11z" fill="#d83830" />
          <path d="M13 15l3-6 2 6z" fill="#e89090" />
        </svg>
        <LogoText>MxDraw<LogoSoft>Software</LogoSoft></LogoText>
      </LogoCell>
    </StatusBar>
  </Frame>
);

export default App;
